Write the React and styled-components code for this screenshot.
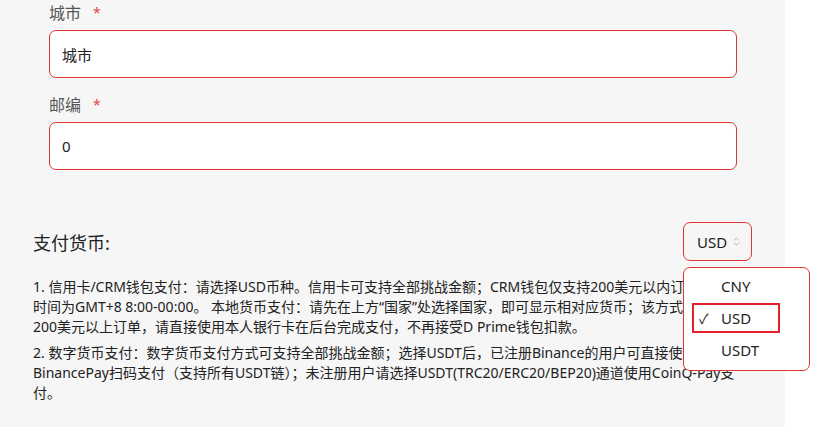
import React from "react";
import styled, { createGlobalStyle } from "styled-components";
import { ChevronsUpDown } from "lucide-react";

const Global = createGlobalStyle`
  html, body { margin: 0; padding: 0; background: #ffffff; }
  body { font-family: "Noto Sans", "Noto Sans CJK SC", sans-serif; color: #222; }
  * { box-sizing: border-box; }
`;

const Panel = styled.div`
  width: 785px;
  min-height: 427px;
  background: #f6f6f6;
  padding: 2px 33px 0 33px;
`;

const Fields = styled.div`
  display: flex;
  flex-direction: column;
  gap: 16px;
  padding: 0 15px 0 16px;
`;

const Field = styled.div`
  display: flex;
  flex-direction: column;
  gap: 6px;
`;

const Label = styled.label`
  display: flex;
  align-items: center;
  gap: 12px;
  font-size: 16px;
  line-height: 22px;
  color: #555;
`;

const Star = styled.span`
  color: #e5484d;
  font-size: 14px;
`;

const Input = styled.input`
  height: 48px;
  width: 100%;
  border: 1px solid #e03535;
  border-radius: 7px;
  background: #fff;
  padding: 0 12px;
  font-family: inherit;
  font-size: 15px;
  color: #222;
  outline: none;
`;

const CurrencyRow = styled.div`
  display: flex;
  align-items: center;
  justify-content: space-between;
  margin-top: 52px;
`;

const Heading = styled.h3`
  margin: 0;
  font-size: 18px;
  font-weight: 400;
  color: #222;
`;

const SelectWrap = styled.div`
  position: relative;
`;

const SelectBox = styled.div`
  height: 39px;
  width: 69px;
  border: 1px solid #e03535;
  border-radius: 7px;
  display: flex;
  align-items: center;
  gap: 4px;
  padding-left: 13px;
  font-size: 15px;
  color: #222;
  background: transparent;
  svg { color: #999; }
`;

const Menu = styled.ul`
  position: absolute;
  top: 45px;
  left: 0;
  width: 127px;
  margin: 0;
  padding: 3px 0 5px;
  list-style: none;
  background: #fff;
  border: 1px solid #e03535;
  border-radius: 7px;
  display: flex;
  flex-direction: column;
  gap: 2px;
  z-index: 2;
`;

const Option = styled.li`
  height: 30px;
  width: 88px;
  margin-left: 8px;
  display: flex;
  align-items: center;
  font-size: 15px;
  color: #222;
  border: 2px solid ${(p) => (p.$active ? "#e3202b" : "transparent")};
`;

const Check = styled.span`
  width: 27px;
  padding-left: 5px;
  font-size: 14px;
`;

const Notes = styled.div`
  margin-top: 16px;
  display: flex;
  flex-direction: column;
  gap: 6px;
`;

const Note = styled.p`
  margin: 0;
  font-size: 14px;
  line-height: 20px;
  color: #222;
  white-space: nowrap;
`;

export default function App() {
  return (
    <>
      <Global />
      <Panel>
        <Fields>
          <Field>
            <Label>
              城市 <Star>*</Star>
            </Label>
            <Input defaultValue="城市" readOnly />
          </Field>
          <Field>
            <Label>
              邮编 <Star>*</Star>
            </Label>
            <Input defaultValue="0" readOnly />
          </Field>
        </Fields>

        <CurrencyRow>
          <Heading>支付货币:</Heading>
          <SelectWrap>
            <SelectBox>
              USD <ChevronsUpDown size={11} strokeWidth={1.5} />
            </SelectBox>
            <Menu>
              <Option>
                <Check />
                CNY
              </Option>
              <Option $active>
                <Check>✓</Check>
                USD
              </Option>
              <Option>
                <Check />
                USDT
              </Option>
            </Menu>
          </SelectWrap>
        </CurrencyRow>

        <Notes>
          <Note>
            1. 信用卡/CRM钱包支付：请选择USD币种。信用卡可支持全部挑战金额；CRM钱包仅支持200美元以内订单，
            <br />
            时间为GMT+8 8:00-00:00。 本地货币支付：请先在上方“国家”处选择国家，即可显示相对应货币；该方式
            <br />
            200美元以上订单，请直接使用本人银行卡在后台完成支付，不再接受D Prime钱包扣款。
          </Note>
          <Note>
            2. 数字货币支付：数字货币支付方式可支持全部挑战金额；选择USDT后，已注册Binance的用户可直接使用
            <br />
            BinancePay扫码支付（支持所有USDT链）；未注册用户请选择USDT(TRC20/ERC20/BEP20)通道使用CoinQ-Pay支
            <br />
            付。
          </Note>
        </Notes>
      </Panel>
    </>
  );
}
